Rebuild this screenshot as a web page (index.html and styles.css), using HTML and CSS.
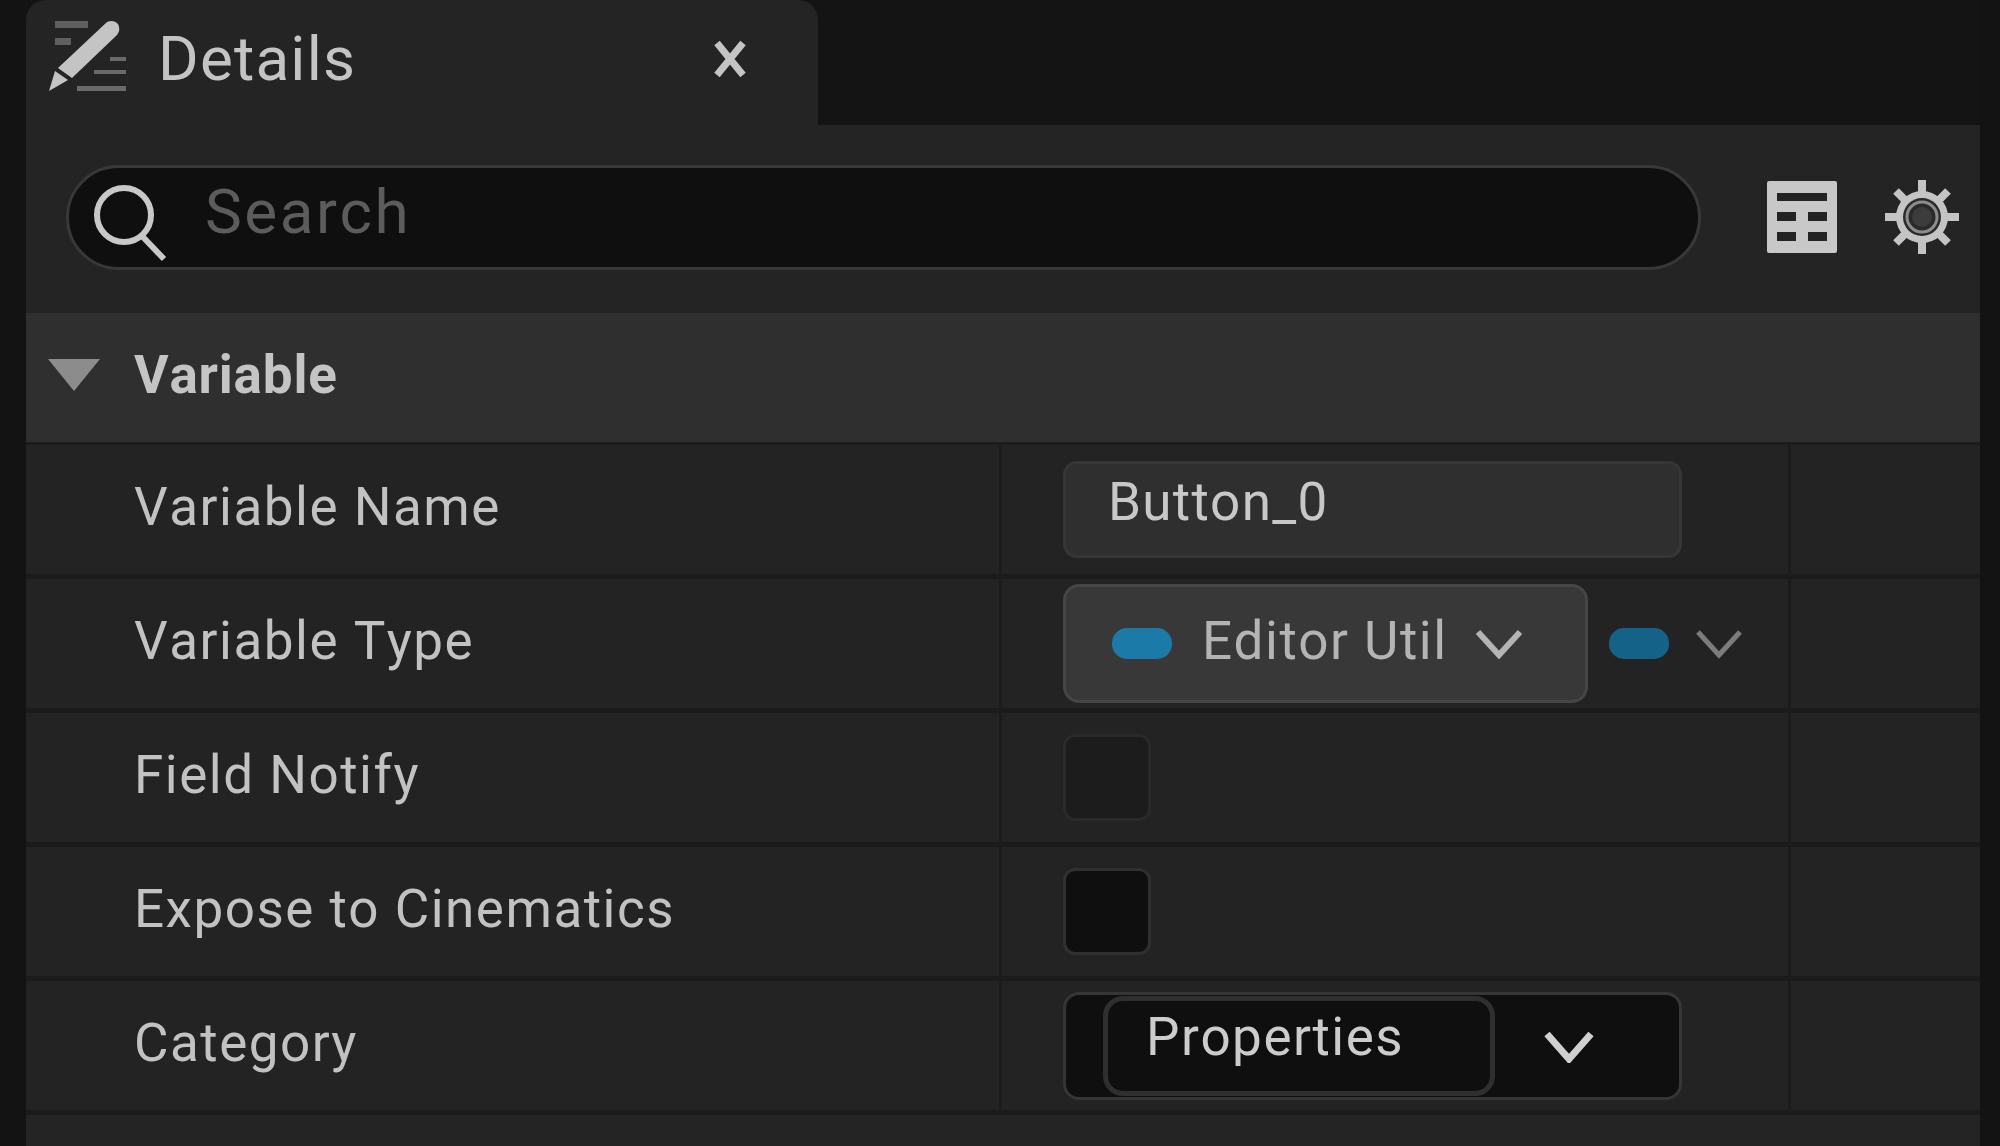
FILE: index.html
```html
<!DOCTYPE html>
<html lang="en">

<head>
    <meta charset="UTF-8">
    <title>Details</title>
    <link rel="stylesheet" href="styles.css">
</head>

<body>
    <div class="panel">
        <div class="tab-bar">
            <div class="tab">
                <svg class="tab-icon" width="80" height="76" viewBox="0 0 80 76">
                    <path d="M2 72 L8 52 L21 61 Z" fill="#c4c4c4"/>
                    <path d="M11 49 L60 3 Q67 0 71 5 Q74 11 70 16 L25 59 Z" fill="#c4c4c4"/>
                    <path d="M8 2 H41 V9 H8 Z M8 19 H24 V26 H8 Z" fill="#5f5f5f"/>
                    <path d="M63 38 H79 V42 H63 Z M47 51 H79 V55 H47 Z M30 67 H79 V72 H30 Z" fill="#6a6a6a"/>
                </svg>
                <span class="tab-title">Details</span>
                <svg class="tab-close" width="36" height="40" viewBox="0 0 36 40">
                    <path d="M5 4 L31 36 M31 4 L5 36" stroke="#c4c4c4" stroke-width="7" fill="none"/>
                </svg>
            </div>
        </div>

        <div class="toolbar">
            <div class="search">
                <svg class="search-icon" width="76" height="78" viewBox="0 0 76 78">
                    <circle cx="31" cy="31" r="27" stroke="#c8c8c8" stroke-width="6" fill="none"/>
                    <path d="M49 52 L71 75" stroke="#c8c8c8" stroke-width="6" fill="none"/>
                </svg>
                <span class="search-text">Search</span>
            </div>
            <svg class="table-icon" width="70" height="72" viewBox="0 0 70 72">
                <path fill-rule="evenodd" fill="#c8c8c8" d="M2 0 H68 Q70 0 70 2 V70 Q70 72 68 72 H2 Q0 72 0 70 V2 Q0 0 2 0 Z M10 12 V20 H60 V12 Z M10 31 V40 H29 V31 Z M41 31 V40 H60 V31 Z M10 51 V60 H29 V51 Z M41 51 V60 H60 V51 Z"/>
            </svg>
            <svg class="gear-icon" width="78" height="76" viewBox="0 0 78 76">
                <g stroke="#c4c4c4" stroke-width="8">
                    <path d="M39 1 V75 M2 38 H76 M13 12 L65 64 M65 12 L13 64"/>
                </g>
                <circle cx="39" cy="38" r="26" fill="#c4c4c4"/>
                <circle cx="39" cy="38" r="19" fill="#2a2a2a"/>
                <circle cx="39" cy="38" r="15" fill="none" stroke="#8c8c8c" stroke-width="3"/>
                <circle cx="39" cy="38" r="10" fill="#3c3c3c"/>
            </svg>
        </div>

        <div class="section-head">
            <svg class="caret" width="52" height="32" viewBox="0 0 52 32">
                <path d="M0 0 H52 L26 32 Z" fill="#8c8c8c"/>
            </svg>
            <span>Variable</span>
        </div>

        <div class="row">
            <div class="label">Variable Name</div>
            <div class="value">
                <div class="text-field">Button_0</div>
            </div>
            <div class="extra"></div>
        </div>

        <div class="row">
            <div class="label">Variable Type</div>
            <div class="value">
                <div class="type-drop">
                    <span class="pill"></span>
                    <span class="type-name">Editor Util</span>
                    <svg class="chev" width="48" height="30" viewBox="0 0 48 30">
                        <path d="M3 3 L24 26 L45 3" stroke="#b4b4b4" stroke-width="6" fill="none"/>
                    </svg>
                </div>
                <span class="pill pill-dim"></span>
                <svg class="chev chev-dim" width="48" height="30" viewBox="0 0 48 30">
                    <path d="M3 3 L24 26 L45 3" stroke="#7c7c7c" stroke-width="5" fill="none"/>
                </svg>
            </div>
            <div class="extra"></div>
        </div>

        <div class="row">
            <div class="label">Field Notify</div>
            <div class="value">
                <div class="check check-off"></div>
            </div>
            <div class="extra"></div>
        </div>

        <div class="row">
            <div class="label">Expose to Cinematics</div>
            <div class="value">
                <div class="check"></div>
            </div>
            <div class="extra"></div>
        </div>

        <div class="row">
            <div class="label">Category</div>
            <div class="value">
                <div class="combo">
                    <div class="combo-text">Properties</div>
                    <svg class="combo-chev" width="50" height="32" viewBox="0 0 50 32">
                        <path d="M3 3 L25 28 L47 3" stroke="#d0d0d0" stroke-width="7" fill="none"/>
                    </svg>
                </div>
            </div>
            <div class="extra"></div>
        </div>
    </div>
</body>

</html>
```
FILE: styles.css
```css
* {
    box-sizing: border-box;
}

html, body {
    height: 100%;
}

body {
    margin: 0;
    padding: 0 20px 0 26px;
    overflow: hidden;
    background-color: #131313;
    font-family: 'Roboto', 'Liberation Sans', sans-serif;
    font-kerning: none;
    color: #c2c2c2;
}

/* the reference is an upscaled capture, so everything is a bit soft */
.panel {
    display: flex;
    flex-direction: column;
    height: 100%;
    background-color: #242424;
    filter: blur(0.7px);
}

.tab-bar {
    height: 125px;
    flex: none;
    background-color: #141414;
}

.tab {
    display: flex;
    align-items: center;
    width: 792px;
    height: 125px;
    padding: 0 0 8px 21px;
    background-color: #242424;
    border-radius: 20px 20px 0 0;
}

.tab-icon {
    flex: none;
    margin-top: -4px;
}

.tab-title {
    flex: none;
    width: 198px;
    margin-left: 31px;
    font-size: 62px;
    letter-spacing: 1.2px;
    color: #c4c4c4;
}

.tab-close {
    margin-left: 356px;
}

/* search row */
.toolbar {
    display: flex;
    align-items: center;
    height: 188px;
    flex: none;
    padding: 0 0 4px 40px;
}

.search {
    display: flex;
    align-items: center;
    width: 1635px;
    height: 105px;
    padding: 0 0 0 24px;
    background-color: #0f0f0f;
    border: 3px solid #383838;
    border-radius: 53px;
}

.search-icon {
    flex: none;
    margin-top: 12px;
}

.search-text {
    margin: 0 0 12px 36px;
    font-size: 62px;
    letter-spacing: 2.5px;
    color: #5c5c5c;
}

.table-icon {
    flex: none;
    margin-left: 66px;
}

.gear-icon {
    flex: none;
    margin-left: 46px;
}

.section-head {
    display: flex;
    align-items: center;
    height: 132px;
    flex: none;
    padding: 0 0 6px 22px;
    background-color: #2f2f2f;
    border-bottom: 3px solid #1c1c1c;
    font-size: 53px;
    font-weight: 700;
    letter-spacing: 0.8px;
    color: #c4c4c4;
}

.section-head span {
    margin-left: 34px;
}

.row {
    display: grid;
    grid-template-columns: 973px 789px 1fr;
    height: 134px;
    flex: none;
    background-color: #232323;
    border-bottom: 5px solid #1b1b1b;
}

.label {
    display: flex;
    align-items: center;
    padding: 0 0 6px 108px;
    font-size: 53px;
    letter-spacing: 1.5px;
}

.value {
    display: flex;
    align-items: center;
    padding-left: 61px;
    border-left: 3px solid #1c1c1c;
}

.extra {
    border-left: 3px solid #1c1c1c;
}

.text-field {
    width: 619px;
    height: 97px;
    padding: 0 0 0 42px;
    background-color: #2f2f2f;
    border: 3px solid #363636;
    border-radius: 14px;
    font-size: 53px;
    letter-spacing: 1.3px;
    line-height: 76px;
    color: #c8c8c8;
}

.type-drop {
    display: flex;
    align-items: center;
    flex: none;
    width: 525px;
    height: 119px;
    padding: 0 0 0 46px;
    background-color: #383838;
    border: 3px solid #464646;
    border-radius: 16px;
}

.pill {
    flex: none;
    width: 60px;
    height: 31px;
    background-color: #1b7aa8;
    border-radius: 15px;
}

.pill-dim {
    margin-left: 21px;
    background-color: #156288;
}

.type-name {
    width: 243px;
    flex: none;
    margin: 0 0 5px 30px;
    white-space: nowrap;
    font-size: 53px;
    letter-spacing: 1.5px;
    color: #b4b4b4;
}

.chev {
    flex: none;
    margin-left: 30px;
}

.chev-dim {
    margin-left: 26px;
}

.check {
    width: 88px;
    height: 87px;
    background-color: #0f0f0f;
    border: 3px solid #303030;
    border-radius: 12px;
}

.check-off {
    background-color: #1c1c1c;
    border-color: #2a2a2a;
}

.combo {
    display: flex;
    align-items: center;
    width: 619px;
    height: 108px;
    padding-left: 37px;
    background-color: #0f0f0f;
    border: 3px solid #363636;
    border-radius: 16px;
}

.combo-text {
    flex: none;
    width: 392px;
    height: 100px;
    padding: 0 0 0 38px;
    background-color: #0f0f0f;
    border: 5px solid #2f2f2f;
    border-radius: 20px;
    font-size: 53px;
    letter-spacing: 1.5px;
    line-height: 72px;
    color: #cccccc;
}

.combo-chev {
    flex: none;
    margin: 2px 0 0 49px;
}
```
